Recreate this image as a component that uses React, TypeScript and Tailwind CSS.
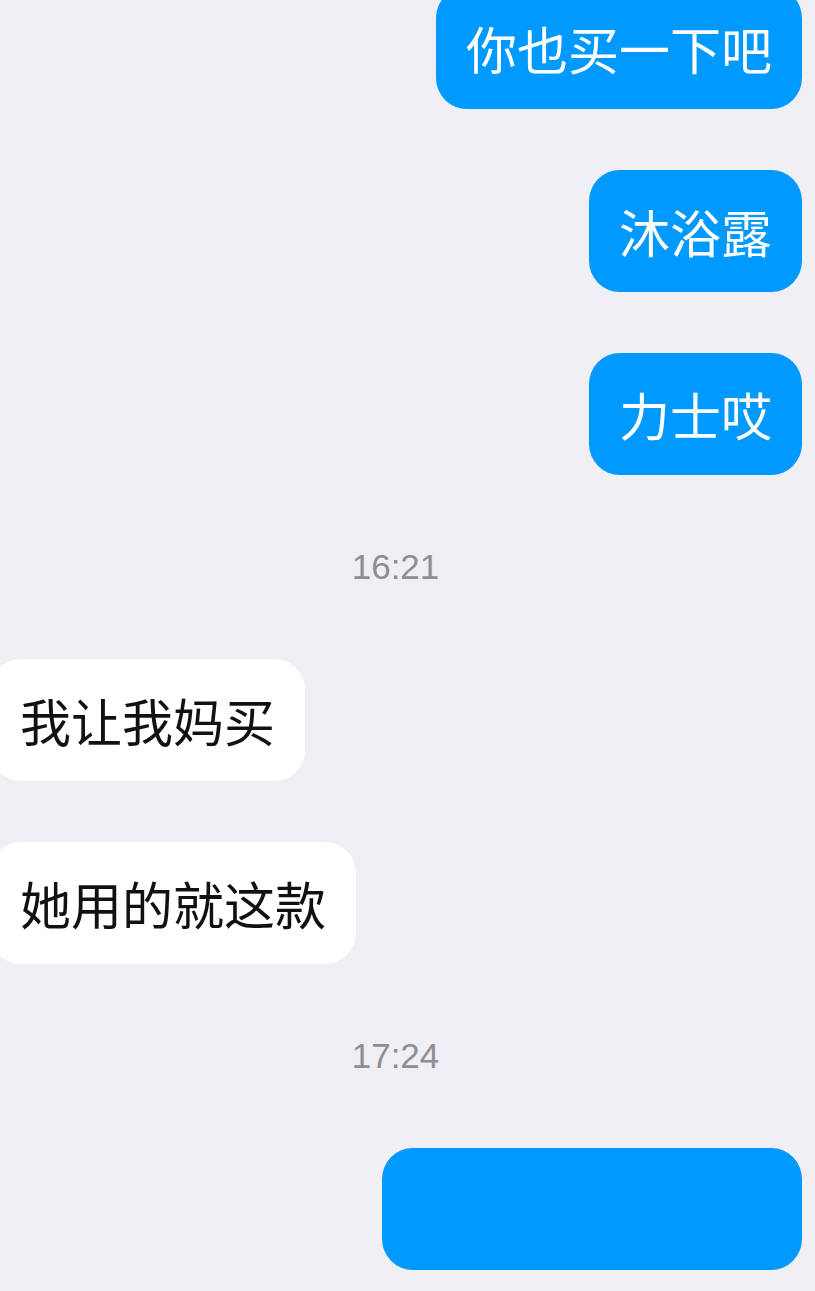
const font = { fontFamily: '"Noto Sans CJK SC", "Noto Sans", sans-serif' };

type Msg =
  | { kind: "out"; text: string }
  | { kind: "in"; text: string }
  | { kind: "time"; text: string };

const MESSAGES: Msg[] = [
  { kind: "out", text: "你也买一下吧" },
  { kind: "out", text: "沐浴露" },
  { kind: "out", text: "力士哎" },
  { kind: "time", text: "16:21" },
  { kind: "in", text: "我让我妈买" },
  { kind: "in", text: "她用的就这款" },
  { kind: "time", text: "17:24" },
  { kind: "out", text: "" },
];

function Bubble({ msg }: { msg: Msg }) {
  if (msg.kind === "time") {
    return (
      <div className="flex h-[62px] items-center justify-center pr-[24px]">
        <span className="font-['Liberation_Sans',sans-serif] text-[35px] text-[#8e8e93]">
          {msg.text}
        </span>
      </div>
    );
  }
  if (msg.kind === "in") {
    return (
      <div className="flex justify-start">
        <div
          className="ml-[-10px] flex h-[122px] items-center rounded-[31px] bg-white px-[30px] text-[51px] text-[#111]"
          style={font}
        >
          {msg.text}
        </div>
      </div>
    );
  }
  return (
    <div className="flex justify-end pr-[13px]">
      {msg.text ? (
        <div
          className="flex h-[122px] items-center rounded-[31px] bg-[#0099ff] px-[30px] text-[51px] text-white"
          style={font}
        >
          {msg.text}
        </div>
      ) : (
        <div className="h-[122px] w-[420px] rounded-[31px] bg-[#0099ff]" />
      )}
    </div>
  );
}

export default function App() {
  return (
    <div className="h-[1291px] w-[815px] overflow-hidden bg-[#efeff4]">
      <div className="mt-[-13px] flex flex-col gap-[61px]">
        {MESSAGES.map((m, i) => (
          <Bubble key={i} msg={m} />
        ))}
      </div>
    </div>
  );
}
